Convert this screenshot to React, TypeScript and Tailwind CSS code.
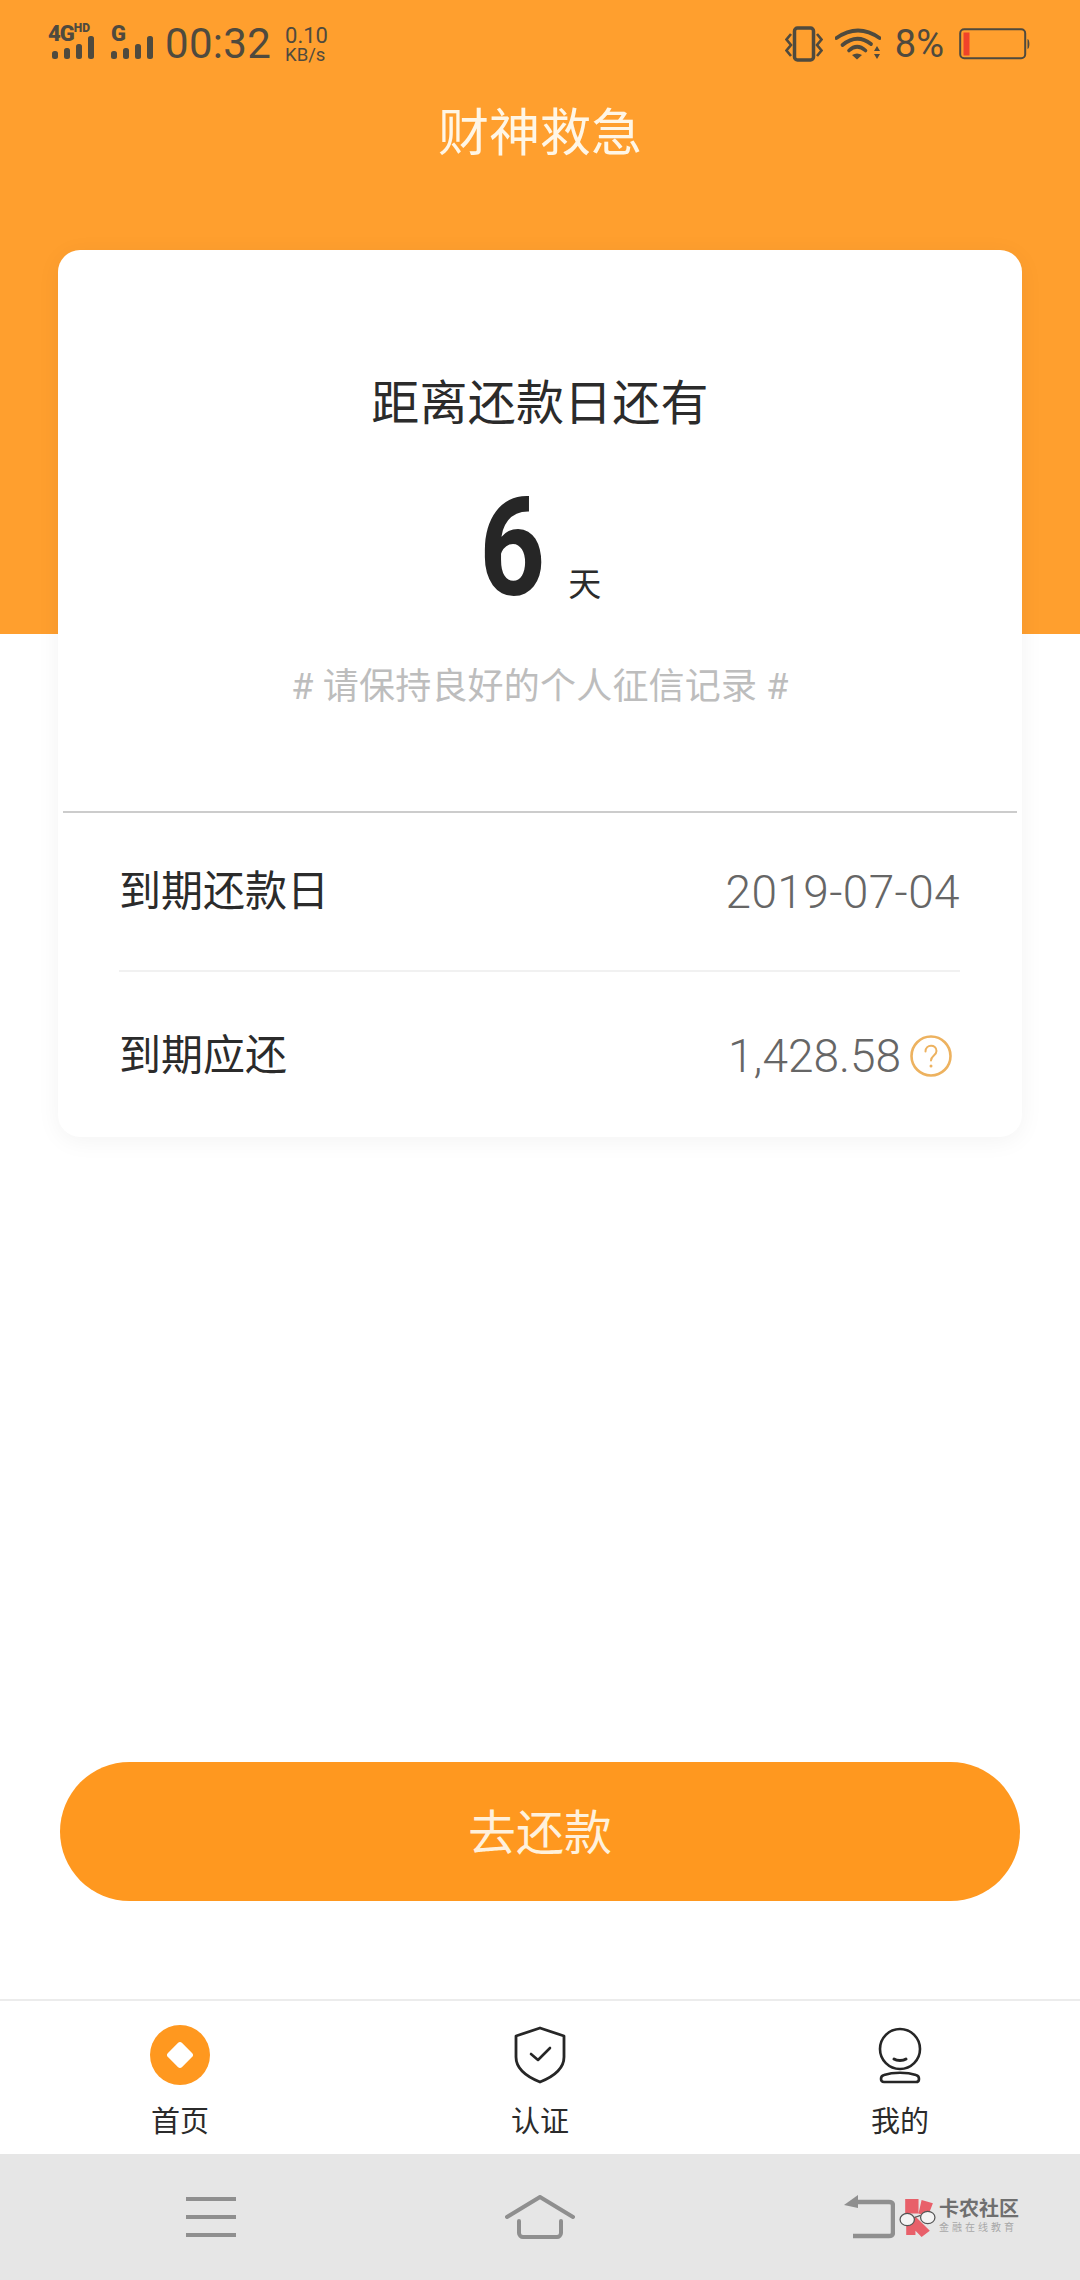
import { ReactNode } from "react";

const cjk = "font-['Roboto','Noto_Sans_CJK_SC',sans-serif]";
const statusInk = "#4f4a3e";
const navInk = "#8f8f8f";

function SignalBars({ width = 42 }: { width?: number }) {
  return (
    <svg width={width} height="23" viewBox="0 0 42 23" fill={statusInk}>
      <rect x="0" y="15" width="6" height="8" rx="2.5" />
      <rect x="12" y="12" width="6" height="11" rx="2.5" />
      <rect x="24" y="8" width="6" height="15" rx="2.5" />
      <rect x="36" y="0" width="6" height="23" rx="2.5" />
    </svg>
  );
}

function StatusBar() {
  return (
    <div className="flex h-[88px] items-center pl-[48px] pr-[50px] text-[#4f4a3e] font-['Roboto',sans-serif]">
      <div className="-mt-[6px] flex w-[55px] flex-col">
        <div className="flex h-[13px] items-start leading-none">
          <span className="text-[22px] font-black tracking-[-1px]">4G</span>
          <span className="mt-[-1px] text-[12px] font-black">HD</span>
        </div>
        <div className="pl-[4px]">
          <SignalBars />
        </div>
      </div>
      <div className="-mt-[6px] ml-[8px] flex w-[42px] flex-col">
        <span className="h-[13px] text-[22px] font-black leading-none">G</span>
        <SignalBars />
      </div>
      <span className="ml-[12px] text-[42px] leading-none tracking-[0.3px]">00:32</span>
      <div className="ml-[14px] flex flex-col pt-[2px] leading-none">
        <span className="text-[22px] leading-[20px]">0.10</span>
        <span className="text-[18.500px] leading-[18px]">KB/s</span>
      </div>
      <div className="ml-auto flex items-center">
        <svg width="38" height="36" viewBox="0 0 38 36" fill="none" stroke={statusInk}>
          <rect x="9.500" y="2" width="19" height="32" rx="3" strokeWidth="3.500" />
          <path d="M6 8l-4.500 5.500L6 19l-4.500 5.500L6 30M32 8l4.500 5.500L32 19l4.500 5.500L32 30" strokeWidth="2.600" />
        </svg>
        <svg className="ml-[12px]" width="46" height="32" viewBox="0 0 46 32" fill="none" stroke={statusInk}>
          <path d="M1.500 10Q23-5 44.500 10" strokeWidth="3.800" strokeLinecap="round" />
          <path d="M7.500 17Q22 5 36 16" strokeWidth="3.800" strokeLinecap="round" />
          <path d="M14 22.500Q22 15 30.500 22.500" strokeWidth="3.600" strokeLinecap="round" />
          <path d="M17 27Q22 24 27 27l-5 4.500z" fill={statusInk} strokeWidth="0" />
          <path d="M42 18l3 5h-6zM42 31l-3-5h6z" fill={statusInk} strokeWidth="0" />
        </svg>
        <span className="ml-[14px] text-[38px] leading-none">8%</span>
        <svg className="ml-[15px]" width="71" height="32" viewBox="0 0 71 32" fill="none">
          <rect x="1.200" y="1.200" width="65" height="29" rx="4" stroke={statusInk} strokeWidth="2" />
          <rect x="4.500" y="4.500" width="6" height="23" fill="#f0432a" />
          <path d="M68.500 11c2.500 0 2.500 10 0 10z" fill={statusInk} />
        </svg>
      </div>
    </div>
  );
}

function DetailRow({ label, children, height }: { label: string; children: ReactNode; height: string }) {
  return (
    <div className={`flex items-center justify-between ${height}`}>
      <span className="text-[42px] leading-none text-[#2b2b2b]">{label}</span>
      {children}
    </div>
  );
}

function CountdownCard() {
  return (
    <div className={`mx-[58px] -mt-[384px] h-[887px] rounded-[22px] bg-white shadow-[0_4px_24px_rgba(0,0,0,0.05)] ${cjk}`}>
      <div className="flex h-[561px] flex-col items-center pt-[130px]">
        <p className="text-[48px] leading-[48px] tracking-[0.2px] text-[#2b2b2b]">距离还款日还有</p>
        <div className="mt-[40px] flex h-[160px] items-end pr-[6px]">
          <span className="scale-x-[0.84] text-[137px] font-bold leading-[160px] text-[#262626]">6</span>
          <span className="mb-[27px] ml-[17px] text-[33px] leading-none text-[#2b2b2b]">天</span>
        </div>
        <p className="mt-[39px] text-[36px] leading-[40px] tracking-[0.2px] text-[#bdbdbd]"># 请保持良好的个人征信记录 #</p>
      </div>
      <div className="mx-[5px] h-[2px] bg-[#cccccc]" />
      <div className="pl-[61px] pr-[62px]">
        <DetailRow label="到期还款日" height="h-[159px] border-b-2 border-[#f1f1f1]">
          <span className="text-[46px] font-light leading-none tracking-[0.4px] text-[#666666]">2019-07-04</span>
        </DetailRow>
        <DetailRow label="到期应还" height="h-[168px] pr-[8px]">
          <div className="flex items-center">
            <span className="text-[46px] font-light leading-none text-[#666666]">1,428.58</span>
            <svg className="ml-[9px]" width="42" height="42" viewBox="0 0 42 42" fill="none">
              <circle cx="21" cy="21" r="19.500" stroke="#edb25f" strokeWidth="2.600" />
              <path d="M15.500 16.500c0-7.500 11-7.500 11-.5 0 4.500-5.500 4.500-5.500 9.500" stroke="#edb25f" strokeWidth="2" strokeLinecap="round" />
              <circle cx="21" cy="31" r="1.500" fill="#edb25f" />
            </svg>
          </div>
        </DetailRow>
      </div>
    </div>
  );
}

function HomeTabIcon() {
  return (
    <svg width="60" height="60" viewBox="0 0 60 60">
      <circle cx="30" cy="30" r="30" fill="#ff981f" />
      <rect x="20" y="20" width="20" height="20" rx="3" fill="#fff" transform="rotate(45 30 30)" />
    </svg>
  );
}

function ShieldTabIcon() {
  return (
    <svg width="52" height="58" viewBox="0 0 52 58" fill="none" stroke="#262626" strokeWidth="2.800">
      <path d="M26 2 2 10v21c0 13 14 21 24 25 10-4 24-12 24-25V10z" strokeLinejoin="round" />
      <path d="M17 28l7 6 12-12" strokeWidth="2.600" strokeLinecap="round" strokeLinejoin="round" />
    </svg>
  );
}

function PersonTabIcon() {
  return (
    <svg width="44" height="58" viewBox="0 0 44 58" fill="none" stroke="#262626" strokeWidth="2.600">
      <circle cx="22" cy="23" r="20" />
      <path d="M16 33c3 2 9 2 12 0" strokeWidth="3" strokeLinecap="round" />
      <path d="M6 56c-4 0-4-6 0-7 9-3 23-3 32 0 4 1 4 7 0 7z" strokeLinejoin="round" />
    </svg>
  );
}

const tabs = [
  { label: "首页", icon: <HomeTabIcon /> },
  { label: "认证", icon: <ShieldTabIcon /> },
  { label: "我的", icon: <PersonTabIcon /> },
];

function TabBar() {
  return (
    <div className={`grid h-[155px] grid-cols-3 border-t-2 border-[#ececec] bg-white ${cjk}`}>
      {tabs.map((tab) => (
        <div key={tab.label} className="flex flex-col items-center pt-[24px]">
          <div className="flex h-[60px] items-center justify-center">{tab.icon}</div>
          <span className="mt-[21px] text-[29px] leading-[32px] text-[#2b2b2b]">{tab.label}</span>
        </div>
      ))}
    </div>
  );
}

function KanongLogo() {
  return (
    <div className="absolute left-[899px] top-[44px] flex items-start">
      <svg width="37" height="39" viewBox="0 0 36 38">
        <path d="M6 1h13v14H6zM22 2l11 3-5 13-9-3zM7 23l9-5 14 14-8 6-6-6v4H7z" fill="#e8606a" />
        <path d="M15 19l6-2" stroke="#555" strokeWidth="1.200" />
        <ellipse cx="8" cy="21" rx="7" ry="6" fill="#f4f4f4" stroke="#555" strokeWidth="1.200" />
        <ellipse cx="28" cy="19" rx="7" ry="6" fill="#f4f4f4" stroke="#555" strokeWidth="1.200" />
      </svg>
      <div className="ml-[3px] flex flex-col pt-[1px]">
        <span className="text-[20px] font-bold leading-[20px] text-[#6f6f6f]">卡农社区</span>
        <span className="mt-[3px] text-[10px] leading-[12px] tracking-[3px] text-[#a8a8a8]">金融在线教育</span>
      </div>
    </div>
  );
}

function NavBar() {
  return (
    <div className={`relative grid h-[126px] grid-cols-3 bg-[#e6e6e6] ${cjk}`}>
      <div className="flex items-center justify-center">
        <svg className="ml-[62px]" width="50" height="42" viewBox="0 0 50 42" stroke={navInk} strokeWidth="4">
          <path d="M0 3h50M0 21h50M0 39h50" />
        </svg>
      </div>
      <div className="flex items-center justify-center">
        <svg width="70" height="44" viewBox="0 0 70 44" fill="none" stroke={navInk} strokeWidth="4" strokeLinecap="round" strokeLinejoin="round">
          <path d="M2 22 35 2l33 20" />
          <path d="M14 26v12c0 2 2 4 4 4h34c2 0 4-2 4-4V26" />
        </svg>
      </div>
      <div className="flex items-center">
        <svg className="ml-[123px]" width="52" height="44" viewBox="0 0 52 44" fill="none">
          <path d="M14 7h32c3 0 4 1 4 4v26c0 3-1 4-4 4H10" stroke={navInk} strokeWidth="4.500" />
          <path d="M15 0v13L1 10z" fill={navInk} />
        </svg>
        <KanongLogo />
      </div>
    </div>
  );
}

export default function App() {
  return (
    <div className={`flex h-[2280px] w-[1080px] flex-col overflow-hidden bg-white ${cjk}`}>
      <header className="h-[634px] shrink-0 bg-[#ff9f2e]">
        <StatusBar />
        <h1 className="mt-[21px] text-center text-[51px] leading-[50px] text-[#fff6e6]">财神救急</h1>
      </header>
      <CountdownCard />
      <button className="mx-[60px] mt-[625px] h-[139px] shrink-0 rounded-full bg-[#ff981f] pt-[4px] text-[48px] text-[#fff1dc]">
        去还款
      </button>
      <div className="mt-auto">
        <TabBar />
        <NavBar />
      </div>
    </div>
  );
}
